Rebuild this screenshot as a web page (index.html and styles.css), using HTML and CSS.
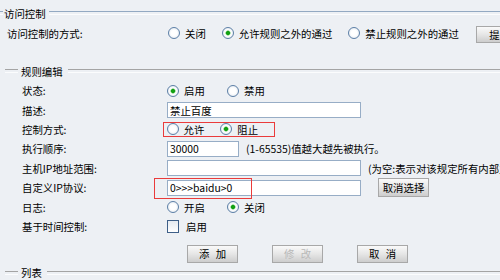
FILE: index.html
```html
<!DOCTYPE html>
<html lang="zh-CN">

<head>
    <meta charset="UTF-8">
    <title>访问控制</title>
    <link rel="stylesheet" href="styles.css">
</head>

<body>
    <div class="legend legend-main"><span>访问控制</span></div>

    <div class="row row-main">
        <span class="label">访问控制的方式:</span>
        <span class="radio">关闭</span>
        <span class="radio on">允许规则之外的通过</span>
        <span class="radio">禁止规则之外的通过</span>
        <button class="btn btn-submit">提 交</button>
    </div>

    <div class="legend legend-inner"><span>规则编辑</span></div>

    <div class="rules">
        <div class="row">
            <span class="label">状态:</span>
            <span class="options">
                <span class="radio on">启用</span>
                <span class="radio">禁用</span>
            </span>
        </div>
        <div class="row">
            <span class="label">描述:</span>
            <input class="field wide" type="text" value="禁止百度">
        </div>
        <div class="row">
            <span class="label">控制方式:</span>
            <span class="options mark">
                <span class="radio">允许</span>
                <span class="radio on">阻止</span>
            </span>
        </div>
        <div class="row">
            <span class="label">执行顺序:</span>
            <input class="field short" type="text" value="30000">
            <span class="hint">(1-65535)值越大越先被执行。</span>
        </div>
        <div class="row">
            <span class="label">主机IP地址范围:</span>
            <input class="field wide" type="text" value="">
            <span class="hint">(为空:表示对该规定所有内部主机有效)</span>
        </div>
        <div class="row">
            <span class="label">自定义IP协议:</span>
            <span class="field-wrap">
                <input class="field wide" type="text" value="0>>>baidu>0">
                <span class="mark-box"></span>
            </span>
            <button class="btn btn-pick">取消选择</button>
        </div>
        <div class="row">
            <span class="label">日志:</span>
            <span class="options">
                <span class="radio">开启</span>
                <span class="radio on">关闭</span>
            </span>
        </div>
        <div class="row">
            <span class="label">基于时间控制:</span>
            <span class="check">启用</span>
        </div>
    </div>

    <div class="actions">
        <button class="btn">添 加</button>
        <button class="btn" disabled>修 改</button>
        <button class="btn">取 消</button>
    </div>

    <div class="legend legend-inner legend-list"><span>列表</span></div>
</body>

</html>
```

FILE: styles.css
```css
* {
    box-sizing: border-box;
}

body {
    margin: 0;
    width: 500px;
    height: 280px;
    overflow: hidden;
    background-color: #edf0f4;
    font-family: "Noto Sans CJK SC", "Noto Sans", sans-serif;
    font-size: 10.4px;
    color: #000;
}

/* 分组标题线 */
.legend {
    display: flex;
    align-items: center;
    height: 14px;
    white-space: nowrap;
}

.legend::before,
.legend::after {
    content: "";
    height: 2px;
    border-top: 1px solid #a4a4a4;
    border-bottom: 1px solid #fbfcfd;
}

.legend::before {
    width: 13px;
    margin-right: 3px;
}

.legend::after {
    flex: 1;
    margin-left: 5px;
}

.legend-main {
    margin-top: 6px;
}

.legend-main::before {
    width: 3px;
    margin-right: 1px;
    border-top-color: #93a9c2;
}

.legend-main::after {
    margin-left: 3px;
    border-top-color: #93a9c2;
}

.legend-inner {
    padding-left: 5px;
    margin-top: 21px;
}

.legend-list {
    margin-top: 3px;
}

/* 表单行 */
.row {
    display: flex;
    align-items: center;
    height: 19.4px;
    white-space: nowrap;
}

.row>* {
    flex-shrink: 0;
}

.rules {
    margin-top: 3px;
}

.label {
    width: 167px;
    padding-left: 22px;
}

.row-main {
    height: 20px;
    margin-top: 3px;
}

.row-main .label {
    width: 168px;
    padding-left: 7px;
}

.row-main .radio {
    margin-right: 16px;
}

/* 单选 / 复选 */
.radio,
.check {
    display: inline-flex;
    align-items: center;
}

.radio::before {
    content: "";
    width: 10px;
    height: 10px;
    margin-right: 5px;
    border: 1px solid #5c7fa6;
    border-radius: 50%;
    background: radial-gradient(circle, #fff 40%, #d9e1ea);
}

.radio.on::before {
    background: radial-gradient(circle, #13a013 0 1.6px, #8fd48f 2.3px, #fff 3px, #d9e1ea);
}

.check::before {
    content: "";
    width: 10px;
    height: 11px;
    margin-right: 7px;
    border: 1px solid #3e5f88;
    background: linear-gradient(#e6ebf1, #fff);
}

.options {
    display: flex;
    align-items: center;
}

.options .radio {
    width: 60px;
}

.options.mark {
    height: 15px;
    width: 112px;
    margin-left: -4px;
    padding-left: 2.5px;
    border: 1.5px solid #ea3b3b;
}

/* 输入框 */
.field {
    height: 16px;
    padding: 0 2px;
    border: 1px solid #97adc6;
    background-color: #fff;
    font: inherit;
    color: #000;
    outline: none;
}

.wide {
    width: 194px;
}

.short {
    width: 72px;
}

.field-wrap {
    position: relative;
    display: flex;
}

.mark-box {
    position: absolute;
    left: -13px;
    top: -2px;
    width: 98px;
    height: 21px;
    border: 1.5px solid #ea3b3b;
}

.hint {
    margin-left: 7px;
}

/* 按钮 */
.btn {
    width: 51px;
    height: 18px;
    padding: 0;
    border: 1px solid #a8a8a8;
    background: linear-gradient(#fafafa, #e6e6e6 50%, #cdcdcd);
    font: inherit;
    color: #000;
    word-spacing: 4px;
}

.btn[disabled] {
    color: #b8b8b8;
}

.btn-submit {
    width: 54px;
    height: 17px;
    margin-left: 1px;
    margin-top: 3px;
}

.btn-pick {
    height: 19px;
    margin-left: 17px;
    word-spacing: 0;
}

.actions {
    display: flex;
    gap: 34px;
    height: 18px;
    margin-top: 8.5px;
    padding-left: 187px;
}
```
